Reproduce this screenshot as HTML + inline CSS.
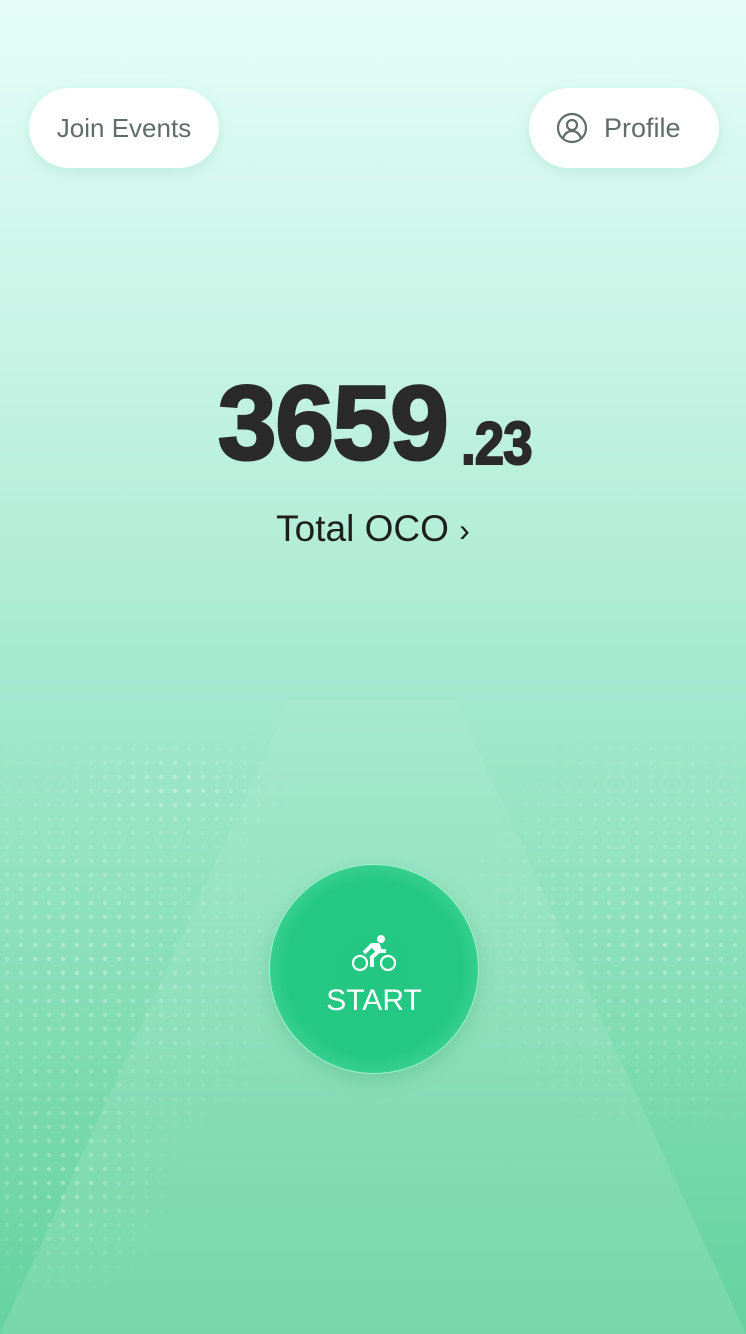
<!DOCTYPE html>
<html><head><meta charset="utf-8"><style>
*{margin:0;padding:0;box-sizing:border-box}
body{width:746px;height:1334px;overflow:hidden;position:relative;font-family:"Liberation Sans",sans-serif;
background:linear-gradient(180deg,#e4fdf8 0%,#c9f4e6 25%,#a6e9d0 50%,#8ce0bb 70%,#76d8ab 85%,#66d29f 100%);}
.btn{position:absolute;top:88px;height:80px;background:#fff;border-radius:40px;box-shadow:0 4px 12px rgba(120,200,170,.25);color:#5f6e68;font-size:26px;display:flex;align-items:center}
.tri{position:absolute;left:0;top:0;width:746px;height:1334px}
.n{position:absolute;color:#2a2a2a;font-weight:bold;white-space:nowrap;line-height:1;-webkit-text-stroke:3px #2a2a2a;transform-origin:left top}
.circle{position:absolute;left:269px;top:864px;width:210px;height:210px;border-radius:50%;
background:radial-gradient(circle at 50% 50%,#22c780 0%,#25c883 60%,#4dd89d 85%,#8af0c4 100%);box-shadow:0 6px 18px rgba(40,150,100,.25);border:1px solid rgba(200,255,230,.7)}
</style></head><body>
<svg class="tri" viewBox="0 0 746 1334">
<defs><linearGradient id="g" x1="0" y1="0" x2="0" y2="1"><stop offset="0" stop-color="#fff" stop-opacity="0.05"/><stop offset="1" stop-color="#fff" stop-opacity="0.12"/></linearGradient>
<radialGradient id="d" cx="0.5" cy="0.5" r="0.5"><stop offset="0" stop-color="#fff" stop-opacity="1"/><stop offset="1" stop-color="#fff" stop-opacity="0"/></radialGradient>
<pattern id="p" width="14" height="14" patternUnits="userSpaceOnUse"><circle cx="7" cy="7" r="2.2" fill="#fff" fill-opacity=".35"/></pattern>
<mask id="m"><ellipse cx="80" cy="960" rx="230" ry="240" fill="url(#d)"/><ellipse cx="180" cy="790" rx="120" ry="60" fill="url(#d)"/><ellipse cx="660" cy="930" rx="220" ry="220" fill="url(#d)"/><ellipse cx="60" cy="1180" rx="120" ry="120" fill="url(#d)"/></mask></defs>
<rect width="746" height="1334" fill="url(#p)" mask="url(#m)"/>
<polygon points="290,700 455,700 746,1334 0,1334" fill="url(#g)"/>
</svg>
<div class="btn" style="left:29px;width:190px;justify-content:center">Join Events</div>
<div class="btn" style="left:529px;width:190px;padding-left:27px">
<svg width="32" height="32" viewBox="0 0 32 32" fill="none" stroke="#5f6e68" stroke-width="2.2"><circle cx="16" cy="16" r="14"/><circle cx="16" cy="13" r="5"/><path d="M7 26c2-5 5-7 9-7s7 2 9 7"/></svg>
<span style="margin-left:16px;font-size:27px">Profile</span></div>
<div class="n" style="left:218px;top:371px;font-size:105px;letter-spacing:-1px">3659</div>
<div class="n" style="left:461px;top:414px;font-size:60px;transform:scaleX(.88);letter-spacing:-1px;-webkit-text-stroke:2px #2a2a2a">.23</div>
<div style="position:absolute;left:0;width:746px;top:508px;text-align:center;font-size:37px;color:#1e1e1e">Total OCO <span style="font-size:32px">›</span></div>
<div class="circle"></div>
<svg style="position:absolute;left:350px;top:933px" width="48" height="40" viewBox="0 0 48 40" fill="none" stroke="#fff" stroke-width="2.2">
<circle cx="10" cy="30" r="7"/><circle cx="38" cy="30" r="7"/><circle cx="31" cy="6" r="4" fill="#fff" stroke="none"/>
<path d="M14 20l8-8h6l2 6h6M22 12l6 7-6 5v10" stroke-width="4" stroke-linejoin="round"/></svg>
<div style="position:absolute;left:269px;width:210px;top:984px;text-align:center;color:#fff;font-size:30px">START</div>
</body></html>
